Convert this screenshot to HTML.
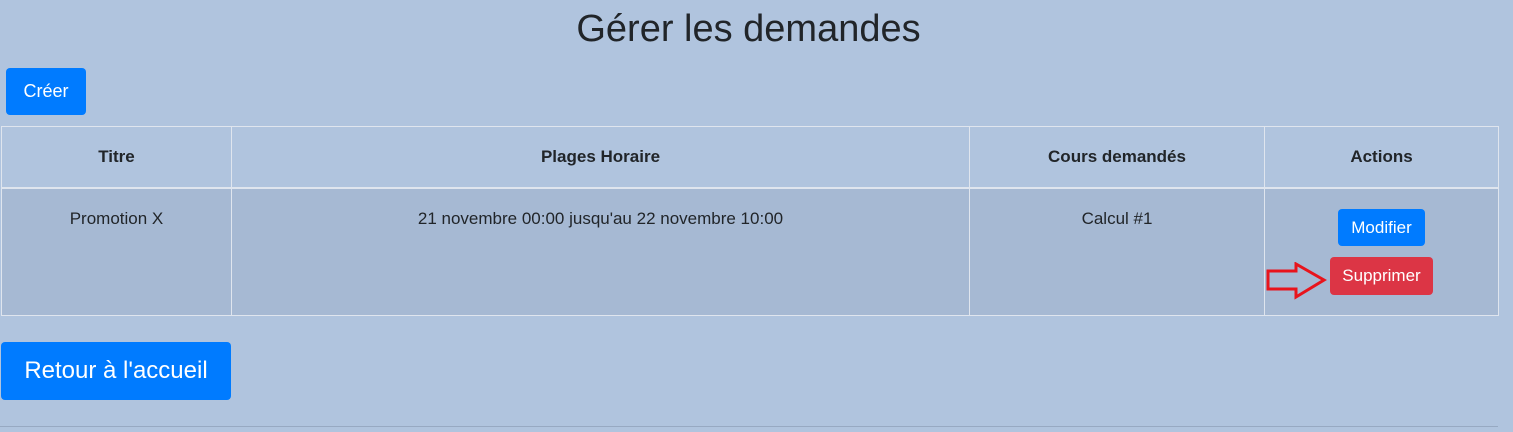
<!DOCTYPE html>
<html><head><meta charset="utf-8"><style>
body{margin:0;width:1513px;height:432px;background:#b0c4de;font-family:"Liberation Sans",sans-serif;color:#212529;position:relative;overflow:hidden}
.a{position:absolute}
h1{position:absolute;left:0;width:1497px;top:5px;margin:0;text-align:center;font-weight:400;font-size:38px;line-height:48px}
.btn{position:absolute;color:#fff;border-radius:4px;text-align:center;box-sizing:border-box}
table{position:absolute;left:1px;top:126px;border-collapse:collapse;width:1498px}
td,th{border:1px solid #dfe5ee;text-align:center;font-size:17px;padding:0}
th{height:60px;font-weight:700}
td{height:127px;vertical-align:top;padding-top:20px;box-sizing:border-box;background:#a6b9d3}
tr.h th{border-bottom:2px solid #dfe5ee}
</style></head><body>
<h1>Gérer les demandes</h1>
<div class="btn" style="left:6px;top:68px;width:80px;height:47px;line-height:47px;background:#007bff;font-size:18px">Créer</div>
<table>
<tr class="h"><th style="width:229px">Titre</th><th style="width:737px">Plages Horaire</th><th style="width:294px">Cours demandés</th><th>Actions</th></tr>
<tr><td>Promotion X</td><td>21 novembre 00:00 jusqu'au 22 novembre 10:00</td><td>Calcul #1</td><td></td></tr>
</table>
<div class="btn" style="left:1338px;top:209px;width:87px;height:37px;line-height:37px;background:#007bff;font-size:17px">Modifier</div>
<div class="btn" style="left:1330px;top:257px;width:103px;height:38px;line-height:38px;background:#dc3545;font-size:17px">Supprimer</div>
<svg class="a" style="left:1266px;top:262px" width="62" height="38"><path d="M2 9 H30 V2 L58 18 L30 35 V27 H2 Z" fill="none" stroke="#e8141c" stroke-width="3"/></svg>
<div class="btn" style="left:1px;top:342px;width:230px;height:58px;line-height:58px;background:#007bff;font-size:24px">Retour à l'accueil</div>
<div class="a" style="left:0;top:426px;width:1498px;height:1px;background:#97a9c2"></div>
</body></html>
